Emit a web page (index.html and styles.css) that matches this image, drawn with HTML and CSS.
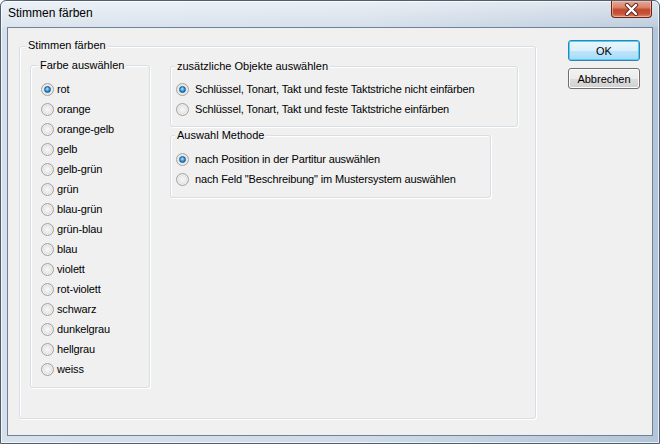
FILE: index.html
```html
<!DOCTYPE html>
<html lang="de">
<head>
<meta charset="utf-8">
<title>Stimmen färben</title>
<link rel="stylesheet" href="styles.css">
</head>
<body>
<div class="window">
  <div class="titlebar">
    <span class="title">Stimmen färben</span>
    <button class="close" aria-label="Schließen">
      <svg width="15" height="13" viewBox="0 0 15 13">
        <path d="M3 2 L12 11 M12 2 L3 11" stroke="#5a2a20" stroke-width="4.2" stroke-linecap="round" fill="none"/>
        <path d="M3 2 L12 11 M12 2 L3 11" stroke="#ffffff" stroke-width="2.4" stroke-linecap="round" fill="none"/>
      </svg>
    </button>
  </div>
  <div class="client">
    <div class="group outer">
      <div class="legend">Stimmen färben</div>
      <div class="row">
        <div class="group farbe">
          <div class="legend">Farbe auswählen</div>
          <div class="radios">
            <label class="item"><input type="radio" name="farbe" checked><span>rot</span></label>
            <label class="item"><input type="radio" name="farbe"><span>orange</span></label>
            <label class="item"><input type="radio" name="farbe"><span>orange-gelb</span></label>
            <label class="item"><input type="radio" name="farbe"><span>gelb</span></label>
            <label class="item"><input type="radio" name="farbe"><span>gelb-grün</span></label>
            <label class="item"><input type="radio" name="farbe"><span>grün</span></label>
            <label class="item"><input type="radio" name="farbe"><span>blau-grün</span></label>
            <label class="item"><input type="radio" name="farbe"><span>grün-blau</span></label>
            <label class="item"><input type="radio" name="farbe"><span>blau</span></label>
            <label class="item"><input type="radio" name="farbe"><span>violett</span></label>
            <label class="item"><input type="radio" name="farbe"><span>rot-violett</span></label>
            <label class="item"><input type="radio" name="farbe"><span>schwarz</span></label>
            <label class="item"><input type="radio" name="farbe"><span>dunkelgrau</span></label>
            <label class="item"><input type="radio" name="farbe"><span>hellgrau</span></label>
            <label class="item"><input type="radio" name="farbe"><span>weiss</span></label>
          </div>
        </div>
        <div class="col">
          <div class="group objekte">
            <div class="legend">zusätzliche Objekte auswählen</div>
            <div class="radios wide">
              <label class="item"><input type="radio" name="obj" checked><span>Schlüssel, Tonart, Takt und feste Taktstriche nicht einfärben</span></label>
              <label class="item"><input type="radio" name="obj"><span>Schlüssel, Tonart, Takt und feste Taktstriche einfärben</span></label>
            </div>
          </div>
          <div class="group methode">
            <div class="legend">Auswahl Methode</div>
            <div class="radios wide">
              <label class="item"><input type="radio" name="meth" checked><span>nach Position in der Partitur auswählen</span></label>
              <label class="item"><input type="radio" name="meth"><span>nach Feld "Beschreibung" im Mustersystem auswählen</span></label>
            </div>
          </div>
        </div>
      </div>
    </div>
    <div class="buttons">
      <button class="btn default">OK</button>
      <button class="btn">Abbrechen</button>
    </div>
  </div>
</div>
</body>
</html>
```
FILE: styles.css
```css
html, body {
  margin: 0;
  padding: 0;
  background: #ffffff;
}

body {
  width: 660px;
  height: 444px;
  overflow: hidden;
  font-family: "Liberation Sans", Arial, sans-serif;
  font-size: 11px;
  color: #000;
}

.window {
  width: 660px;
  height: 444px;
  box-sizing: border-box;
  display: flex;
  flex-direction: column;
  border: 1px solid #4f5f70;
  border-radius: 6px 6px 0 0;
  background:
    linear-gradient(to bottom, rgba(255,255,255,0.55) 0, rgba(255,255,255,0.15) 26px, rgba(255,255,255,0) 27px),
    linear-gradient(to right, #d6e1ec 0%, #cfdbe8 55%, #b3c5d8 100%);
  box-shadow: inset 0 0 0 1px rgba(255,255,255,0.7);
}

.titlebar {
  height: 26px;
  flex: none;
  display: flex;
  align-items: flex-start;
  padding: 0 7px;
}

.title {
  margin-top: 5px;
  font-size: 12px;
  line-height: 15px;
  color: #000;
}

.close {
  margin-left: auto;
  width: 41px;
  height: 17px;
  padding: 0;
  display: flex;
  align-items: center;
  justify-content: center;
  border: 1px solid #6b2218;
  border-top: none;
  border-radius: 0 0 4px 4px;
  background: linear-gradient(to bottom, #e8a796 0%, #d9826b 40%, #c2472c 55%, #c6543a 80%, #e08b6a 100%);
  box-shadow: inset 0 0 0 1px rgba(255,220,200,0.5);
}

.client {
  flex: 1;
  margin: 0 6px 7px 6px;
  border: 1px solid #6f8296;
  background: #f0f0f0;
  display: flex;
  align-items: flex-start;
  gap: 32px;
  padding: 12px 12px 0 11px;
}

.group {
  box-sizing: border-box;
  border: 1px solid #d5dfe5;
  border-radius: 3px;
  box-shadow: inset 1px 1px 0 #ffffff, 1px 1px 0 #ffffff;
  display: flex;
  flex-direction: column;
  align-items: flex-start;
}

.legend {
  background: #f0f0f0;
  padding: 0 2px;
  line-height: 13px;
  height: 13px;
  white-space: nowrap;
}

.outer {
  width: 517px;
  height: 373px;
  margin-top: 6px;
}

.outer > .legend {
  margin: -8px 0 0 6px;
}

.row {
  display: flex;
  align-items: flex-start;
  gap: 20px;
  margin-top: 13px;
  padding-left: 10px;
}

.farbe {
  width: 120px;
  height: 323px;
}

.farbe > .legend,
.objekte > .legend,
.methode > .legend {
  margin: -7px 0 0 7px;
}

.objekte > .legend,
.methode > .legend {
  margin-left: 4px;
}

.col {
  display: flex;
  flex-direction: column;
  align-items: flex-start;
  gap: 8px;
  margin-top: 1px;
}

.objekte {
  width: 348px;
  height: 61px;
}

.methode {
  width: 321px;
  height: 63px;
}

.radios {
  display: flex;
  flex-direction: column;
  margin-top: 7px;
  padding-left: 10px;
}

.objekte .radios {
  margin-top: 6px;
}

.radios.wide {
  padding-left: 5px;
}

.item {
  height: 20px;
  display: flex;
  align-items: center;
  gap: 3px;
  white-space: nowrap;
  letter-spacing: -0.15px;
}

.radios.wide .item {
  gap: 6px;
}

.item input {
  appearance: none;
  -webkit-appearance: none;
  margin: 0;
  width: 13px;
  height: 13px;
  box-sizing: border-box;
  border-radius: 50%;
  border: 1px solid #a2a2a2;
  background: radial-gradient(circle at 50% 50%, #f7f7f7 0, #ececec 40%, #d3d3d3 75%, #c4c4c4 100%);
  box-shadow: inset 0 0 0 1px rgba(255,255,255,0.6);
  flex: none;
  position: relative;
}

.item input:checked::after {
  content: "";
  position: absolute;
  left: 2px;
  top: 2px;
  width: 7px;
  height: 7px;
  box-sizing: border-box;
  border-radius: 50%;
  border: 1px solid #1e5a8c;
  background: radial-gradient(circle at 45% 40%, #b9ecff 0, #4fb3ec 35%, #1a73bd 70%, #0f4f8a 100%);
}

.buttons {
  display: flex;
  flex-direction: column;
  gap: 7px;
}

.btn {
  width: 72px;
  height: 21px;
  box-sizing: border-box;
  padding: 0;
  font-family: "Liberation Sans", Arial, sans-serif;
  font-size: 11px;
  color: #000;
  border: 1px solid #707070;
  border-radius: 3px;
  background: linear-gradient(to bottom, #f2f2f2 0%, #ebebeb 50%, #dddddd 51%, #cfcfcf 100%);
  box-shadow: inset 0 0 0 1px #fcfcfc;
}

.btn.default {
  border-color: #3c7fb1;
  background: linear-gradient(to bottom, #eaf6fd 0%, #d9f0fc 50%, #bee6fd 51%, #a7d9f5 100%);
  box-shadow: inset 0 0 0 1px #48d3fb;
}
```
